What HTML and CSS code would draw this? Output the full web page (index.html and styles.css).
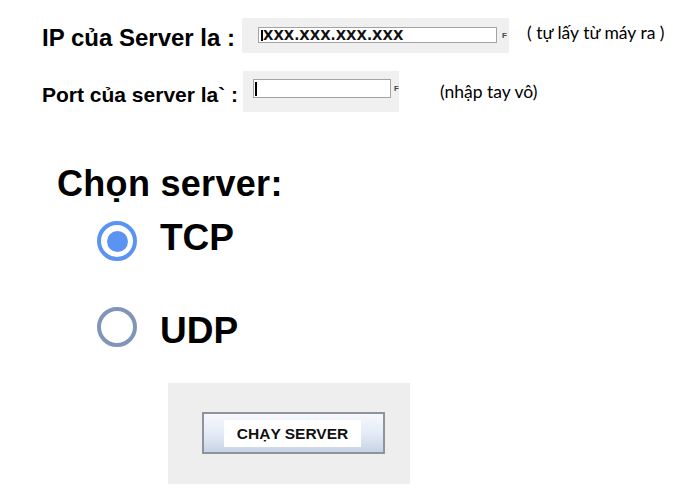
FILE: index.html
```html
<!DOCTYPE html>
<html lang="vi">
<head>
<meta charset="utf-8">
<title>Server</title>
<link rel="stylesheet" href="styles.css">
</head>
<body>
<main class="page">
  <div class="row row-ip">
    <span class="label label-ip">IP của Server la :</span>
    <div class="field-box box-ip">
      <div class="input input-ip"><span class="caret caret-ip"></span>XXX.XXX.XXX.XXX</div>
      <span class="cut">F</span>
    </div>
    <span class="note note-ip">( tự lấy từ máy ra )</span>
  </div>

  <div class="row row-port">
    <span class="label label-port">Port của server la` :</span>
    <div class="field-box box-port">
      <div class="input input-port"><span class="caret caret-port"></span></div>
      <span class="cut">F</span>
    </div>
    <span class="note note-port">(nhập tay vô)</span>
  </div>

  <h1 class="heading">Chọn server:</h1>

  <div class="radio-row radio-tcp">
    <span class="radio radio-on"><span class="dot"></span></span>
    <span class="radio-label label-tcp">TCP</span>
  </div>
  <div class="radio-row radio-udp">
    <span class="radio radio-off"></span>
    <span class="radio-label label-udp">UDP</span>
  </div>

  <div class="panel">
    <button class="run-btn" type="button"><span class="run-text">CHẠY SERVER</span></button>
  </div>
</main>
</body>
</html>
```

FILE: styles.css
```css
html, body {
  margin: 0;
  padding: 0;
  background: #ffffff;
}

.page {
  width: 673px;
  height: 501px;
  overflow: hidden;
  font-family: "Liberation Sans", Arial, sans-serif;
  color: #000;
}

.row {
  display: flex;
  align-items: flex-start;
  padding-left: 42px;
}

.row-ip {
  margin-top: 18px;
}

.row-port {
  margin-top: 18px;
}

.label {
  font-weight: bold;
  white-space: nowrap;
}

.label-ip {
  width: 200px;
  font-size: 24px;
  line-height: 26px;
  margin-top: 7px;
}

.label-port {
  width: 201px;
  font-size: 21px;
  line-height: 24px;
  margin-top: 12px;
}

.field-box {
  background: #f0f0f0;
  display: flex;
  align-items: flex-start;
  box-sizing: border-box;
}

.box-ip {
  width: 267px;
  height: 35px;
  padding: 9px 0 0 16px;
}

.box-port {
  width: 156px;
  height: 41px;
  padding: 8px 0 0 10px;
}

.input {
  box-sizing: border-box;
  background: #fff;
  border: 1px solid #a3a3a3;
  display: flex;
  align-items: center;
}

.input-ip {
  width: 239px;
  height: 16px;
  padding-left: 2px;
  font-family: "DejaVu Sans", Verdana, sans-serif;
  font-weight: bold;
  font-size: 13.5px;
  line-height: 14px;
  color: #111;
}

.input-port {
  width: 139px;
  height: 19px;
  padding-left: 1px;
}

.caret {
  display: inline-block;
  width: 2px;
  background: #000;
}

.caret-ip {
  height: 11px;
}

.caret-port {
  height: 14px;
}

.cut {
  font-size: 8px;
  font-weight: bold;
  color: #444;
  line-height: 8px;
}

.box-ip .cut {
  margin: 5px 0 0 5px;
}

.box-port .cut {
  margin: 6px 0 0 3px;
}

.note {
  font-family: Lato, "Open Sans", sans-serif;
  font-size: 17.5px;
  line-height: 20px;
  white-space: nowrap;
}

.note-ip {
  margin: 5px 0 0 18px;
}

.note-port {
  margin: 11px 0 0 41px;
}

.heading {
  margin: 52px 0 0 57px;
  font-size: 36px;
  line-height: 40px;
  font-weight: bold;
  letter-spacing: 0.3px;
}

.radio-row {
  display: flex;
  align-items: flex-start;
  padding-left: 97px;
  gap: 23px;
  height: 40px;
}

.radio-tcp {
  margin-top: 17px;
}

.radio-udp {
  margin-top: 46px;
}

.radio {
  box-sizing: border-box;
  width: 40px;
  height: 40px;
  border-radius: 50%;
  display: flex;
  align-items: center;
  justify-content: center;
  flex: none;
}

.radio-on {
  border: 4px solid #5b93f2;
}

.radio-off {
  border: 4px solid #7f96b9;
}

.dot {
  width: 21px;
  height: 21px;
  border-radius: 50%;
  background: #5b93f2;
}

.radio-label {
  font-size: 37px;
  line-height: 40px;
  font-weight: bold;
}

.label-tcp {
  margin-top: -3px;
}

.label-udp {
  margin-top: 4px;
}

.panel {
  margin: 36px 0 0 168px;
  width: 242px;
  height: 101px;
  background: #eeeeee;
  box-sizing: border-box;
  padding: 29px 0 0 34px;
}

.run-btn {
  box-sizing: border-box;
  width: 183px;
  height: 42px;
  margin: 0;
  padding: 6px 0 0 20px;
  border: 2px solid #8e949c;
  background: linear-gradient(#f6f9fd, #e3eaf4 55%, #c6d3e6);
  display: flex;
  align-items: flex-start;
  cursor: pointer;
}

.run-text {
  display: block;
  width: 137px;
  height: 27px;
  background: #fff;
  font-family: "Liberation Sans", Arial, sans-serif;
  font-weight: bold;
  font-size: 15.5px;
  line-height: 27px;
  text-align: center;
  color: #111;
}
```
